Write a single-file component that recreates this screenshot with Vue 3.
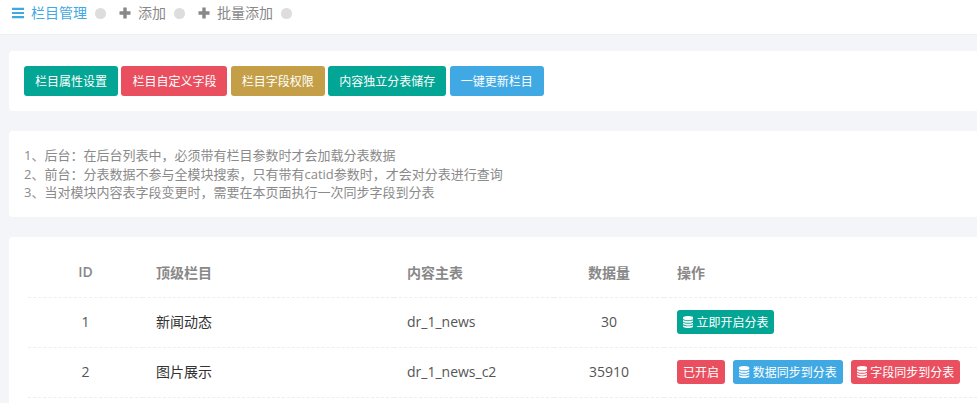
<script setup>
const tools = [
  { name: '栏目属性设置', color: 'green' },
  { name: '栏目自定义字段', color: 'red' },
  { name: '栏目字段权限', color: 'gold' },
  { name: '内容独立分表储存', color: 'green' },
  { name: '一键更新栏目', color: 'blue' },
]

const notes = [
  '1、后台：在后台列表中，必须带有栏目参数时才会加载分表数据',
  '2、前台：分表数据不参与全模块搜索，只有带有catid参数时，才会对分表进行查询',
  '3、当对模块内容表字段变更时，需要在本页面执行一次同步字段到分表',
]

const rows = [
  {
    id: 1, name: '新闻动态', table: 'dr_1_news', total: 30,
    actions: [{ text: '立即开启分表', color: 'green', icon: true }],
  },
  {
    id: 2, name: '图片展示', table: 'dr_1_news_c2', total: 35910,
    actions: [
      { text: '已开启', color: 'red', icon: false },
      { text: '数据同步到分表', color: 'blue', icon: true },
      { text: '字段同步到分表', color: 'red', icon: true },
    ],
  },
]

const dbPath = 'M768 768q237 0 443-43t325-127v170q0 69-103 128t-280 93.500-385 34.500-385-34.500-280-93.500-103-128v-170q119 84 325 127t443 43zm0 768q237 0 443-43t325-127v170q0 69-103 128t-280 93.500-385 34.500-385-34.500-280-93.500-103-128v-170q119 84 325 127t443 43zm0-384q237 0 443-43t325-127v170q0 69-103 128t-280 93.500-385 34.500-385-34.500-280-93.500-103-128v-170q119 84 325 127t443 43zm0-1152q208 0 385 34.500t280 93.500 103 128v128q0 69-103 128t-280 93.500-385 34.500-385-34.500-280-93.500-103-128v-128q0-69 103-128t280-93.500 385-34.500z'
</script>

<template>
  <div class="page">
    <nav class="tabs">
      <a class="tab active">
        <svg class="tab-icon" viewBox="0 0 12 12"><path d="M0 .8h12v2.200H0zM0 4.900h12v2.200H0zM0 9h12v2.200H0z" /></svg>
        <span class="tab-text">栏目管理</span>
        <i class="dot"></i>
      </a>
      <a class="tab">
        <svg class="tab-icon" viewBox="0 0 12 12"><path d="M4.300.5h3.400v3.800h3.800v3.400H7.700v3.800H4.300V7.700H.5V4.300h3.800z" /></svg>
        <span class="tab-text">添加</span>
        <i class="dot"></i>
      </a>
      <a class="tab">
        <svg class="tab-icon" viewBox="0 0 12 12"><path d="M4.300.5h3.400v3.800h3.800v3.400H7.700v3.800H4.300V7.700H.5V4.300h3.800z" /></svg>
        <span class="tab-text">批量添加</span>
        <i class="dot"></i>
      </a>
    </nav>

    <section class="card tools">
      <button v-for="t in tools" :key="t.name" class="btn" :class="t.color">{{ t.name }}</button>
    </section>

    <section class="card notes">
      <p v-for="n in notes" :key="n">{{ n }}</p>
    </section>

    <section class="card list">
      <table>
        <colgroup>
          <col class="c-id" />
          <col class="c-name" />
          <col class="c-table" />
          <col class="c-total" />
          <col />
        </colgroup>
        <thead>
          <tr>
            <th class="center">ID</th>
            <th>顶级栏目</th>
            <th>内容主表</th>
            <th class="center">数据量</th>
            <th>操作</th>
          </tr>
        </thead>
        <tbody>
          <tr v-for="r in rows" :key="r.id">
            <td class="center">{{ r.id }}</td>
            <td class="name">{{ r.name }}</td>
            <td>{{ r.table }}</td>
            <td class="center">{{ r.total }}</td>
            <td>
              <div class="actions">
                <span v-for="a in r.actions" :key="a.text" class="badge" :class="a.color">
                  <svg v-if="a.icon" class="db" viewBox="0 0 1536 1792"><path :d="dbPath" /></svg>
                  {{ a.text }}
                </span>
              </div>
            </td>
          </tr>
        </tbody>
      </table>
    </section>
  </div>
</template>

<style>
html, body {
  margin: 0;
  overflow: hidden;
}
</style>

<style scoped>
.page {
  height: 403px;
  overflow: hidden;
  background: #f4f5f8;
  font-family: "Open Sans", "Noto Sans CJK SC", sans-serif;
  font-size: 14px;
  color: #666;
}

.tabs {
  display: flex;
  height: 34px;
  padding-left: 12px;
  background: #fff;
  border-bottom: 1px solid #eef0f4;
  margin-bottom: 16px;
}

.tab {
  display: flex;
  align-items: center;
  gap: 7px;
  height: 27px;
  margin-right: 13.500px;
  color: #888;
  white-space: nowrap;
}

.tab.active {
  color: #3fa9e4;
}

.tab-text {
  margin-top: -3px;
}

.tab-icon {
  width: 12px;
  height: 12px;
  margin-top: -1px;
  fill: #888;
}

.active .tab-icon {
  fill: #3fa9e4;
}

.dot {
  width: 10.500px;
  height: 10.500px;
  margin-left: 1px;
  border-radius: 50%;
  background: #ddd;
}

.card {
  margin: 0 0 20px 9px;
  background: #fff;
  border-radius: 4px 0 0 4px;
}

.tools {
  display: flex;
  gap: 3.400px;
  height: 60px;
  padding: 15px;
  box-sizing: border-box;
}

.btn {
  height: 30px;
  padding: 0 11px;
  border: 0;
  border-radius: 3px;
  font: inherit;
  font-size: 12px;
  color: #fff;
  white-space: nowrap;
}

.green { background: #03a594; }
.red { background: #e94f5f; }
.gold { background: #c49f47; }
.blue { background: #40a9e4; }

.notes {
  height: 86px;
  padding: 15px;
  box-sizing: border-box;
  font-size: 13px;
  line-height: 18.500px;
  color: #8a8a8a;
}

.notes p {
  margin: 0;
}

.list {
  padding: 12px 0 0 19px;
  margin-bottom: 0;
  height: 166px;
}

table {
  width: 949px;
  table-layout: fixed;
  border-collapse: collapse;
}

.c-id { width: 115px; }
.c-name { width: 251px; }
.c-table { width: 160px; }
.c-total { width: 110px; }

th {
  height: 48px;
  padding: 0 13px 2px;
  box-sizing: border-box;
  text-align: left;
  font-size: 14px;
  font-weight: 600;
  color: #888;
  border-bottom: 1px dashed #eee;
}

td {
  height: 50px;
  padding: 0 13px 2px;
  box-sizing: border-box;
  border-bottom: 1px dashed #eee;
  color: #555;
}

th.center, td.center {
  text-align: center;
}

td.name {
  color: #333;
}

.actions {
  display: flex;
  gap: 8.250px;
  margin-top: 2px;
}

.badge {
  display: flex;
  align-items: center;
  gap: 3.100px;
  height: 24px;
  padding: 0 6px;
  border-radius: 3px;
  font-size: 12px;
  color: #fff;
  white-space: nowrap;
}

.db {
  width: 10.300px;
  height: 12px;
  fill: #fff;
}
</style>
